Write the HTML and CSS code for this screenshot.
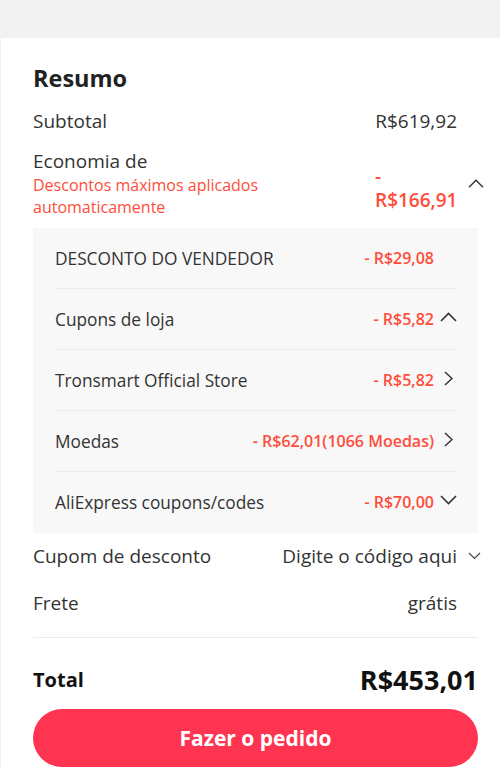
FILE: index.html
```html
<!DOCTYPE html>
<html lang="pt-BR">
<head>
  <meta charset="UTF-8">
  <meta name="viewport" content="width=device-width, initial-scale=1.0">
  <title>Resumo do pedido</title>
  <link rel="stylesheet" href="styles.css">
</head>
<body>
  <div class="summary">
    <h2 class="title">Resumo</h2>

    <div class="row">
      <span class="label">Subtotal</span>
      <span class="value">R$619,92</span>
      <span class="slot"></span>
    </div>

    <div class="row savings">
      <div class="label">
        Economia de
        <div class="hint">Descontos máximos aplicados automaticamente</div>
      </div>
      <span class="value red wrap">- R$166,91</span>
      <span class="slot">
        <svg class="chev-up" width="16" height="9" viewBox="0 0 16 9"><path d="M1 8.2L8 1.2L15 8.2" fill="none" stroke="#333" stroke-width="1.4"/></svg>
      </span>
    </div>

    <div class="discounts">
      <div class="item">
        <span class="item-label">DESCONTO DO VENDEDOR</span>
        <span class="item-value">- R$29,08</span>
        <span class="item-slot"></span>
      </div>
      <div class="item">
        <span class="item-label">Cupons de loja</span>
        <span class="item-value">- R$5,82</span>
        <span class="item-slot">
          <svg class="wide" width="17" height="10" viewBox="0 0 17 10"><path d="M1 9L8.5 1.5L16 9" fill="none" stroke="#333" stroke-width="1.6"/></svg>
        </span>
      </div>
      <div class="item">
        <span class="item-label">Tronsmart Official Store</span>
        <span class="item-value">- R$5,82</span>
        <span class="item-slot">
          <svg class="narrow" width="9" height="15" viewBox="0 0 9 15"><path d="M1 1L8 7.5L1 14" fill="none" stroke="#333" stroke-width="1.5"/></svg>
        </span>
      </div>
      <div class="item">
        <span class="item-label">Moedas</span>
        <span class="item-value">- R$62,01(1066 Moedas)</span>
        <span class="item-slot">
          <svg class="narrow" width="9" height="15" viewBox="0 0 9 15"><path d="M1 1L8 7.5L1 14" fill="none" stroke="#333" stroke-width="1.5"/></svg>
        </span>
      </div>
      <div class="item">
        <span class="item-label">AliExpress coupons/codes</span>
        <span class="item-value">- R$70,00</span>
        <span class="item-slot">
          <svg class="wide" width="17" height="10" viewBox="0 0 17 10"><path d="M1 1L8.5 8.5L16 1" fill="none" stroke="#333" stroke-width="1.6"/></svg>
        </span>
      </div>
    </div>

    <div class="row coupon">
      <span class="label">Cupom de desconto</span>
      <span class="value">Digite o código aqui</span>
      <span class="slot">
        <svg class="chev-small" width="13" height="8" viewBox="0 0 13 8"><path d="M1 1L6.5 6.5L12 1" fill="none" stroke="#444" stroke-width="1.2"/></svg>
      </span>
    </div>

    <div class="row shipping">
      <span class="label">Frete</span>
      <span class="value">grátis</span>
      <span class="slot"></span>
    </div>

    <div class="total">
      <span class="total-label">Total</span>
      <span class="total-value">R$453,01</span>
    </div>

    <button class="order-btn">Fazer o pedido</button>
  </div>
</body>
</html>
```

FILE: styles.css
```css
body {
  margin: 0;
  background: #f2f2f2;
  font-family: "Open Sans", "Noto Sans", sans-serif;
  color: #333;
}
.summary {
  margin: 38px 0 0 1px;
  background: #fff;
  padding: 26px 22px 0 32px;
  height: 731px;
  box-sizing: border-box;
  overflow: hidden;
}
.title {
  margin: 0 0 17px;
  font-size: 23.5px;
  line-height: 28px;
  font-weight: 700;
  color: #222;
}
.row {
  display: flex;
  align-items: center;
  font-size: 19px;
  line-height: 24px;
}
.label {
  flex: 1;
}
.value {
  white-space: nowrap;
}
.slot {
  width: 21px;
  flex: none;
  display: flex;
  align-items: center;
}
.slot svg {
  margin-left: 11px;
  overflow: visible;
}
.red {
  color: #ff4d3a;
  font-weight: 600;
}
.wrap {
  white-space: normal;
  width: 82px;
  margin-top: 8px;
}
.savings {
  margin-top: 16px;
}
.hint {
  color: #ff4d3a;
  font-size: 16px;
  line-height: 22px;
  margin-top: 1px;
}
.discounts {
  margin-top: 10px;
  background: #f8f8f8;
  padding: 0 21px 0 22px;
}
.item {
  display: flex;
  align-items: center;
  height: 60px;
  border-bottom: 1px solid #ececec;
}
.item:last-child {
  border-bottom-color: #f8f8f8;
}
.item-label {
  flex: 1;
  font-size: 17.3px;
  color: #333;
}
.item-value {
  font-size: 16px;
  font-weight: 600;
  color: #ff4d3a;
}
.item-slot {
  width: 23px;
  flex: none;
  display: flex;
  align-items: center;
}
.item-slot .wide {
  margin-left: 6px;
  margin-top: -4px;
}
.item-slot .narrow {
  margin-left: 10px;
  margin-top: -4px;
}
.coupon {
  margin-top: 11px;
}
.shipping {
  margin-top: 23px;
  padding-bottom: 22px;
  border-bottom: 1px solid #ececec;
}
.total {
  display: flex;
  align-items: center;
  justify-content: space-between;
  margin-top: 25px;
  height: 32px;
  color: #111;
}
.total-label {
  font-size: 20px;
  font-weight: 700;
}
.total-value {
  font-size: 27px;
  font-weight: 700;
}
.order-btn {
  display: block;
  width: 100%;
  height: 58px;
  margin-top: 14px;
  border: none;
  border-radius: 29px;
  background: #fe3450;
  color: #fff;
  font-family: "Open Sans", "Noto Sans", sans-serif;
  font-size: 21px;
  font-weight: 700;
}
```
